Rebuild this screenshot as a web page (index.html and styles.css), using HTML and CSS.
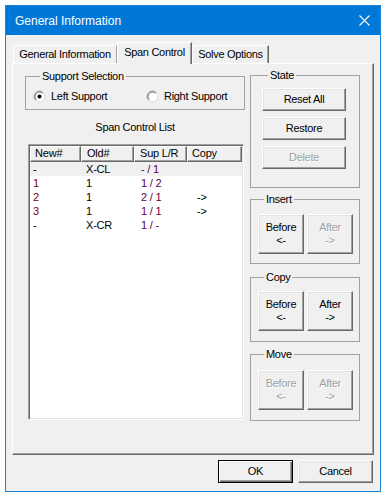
FILE: index.html
```html
<!DOCTYPE html>
<html>
<head>
<meta charset="utf-8">
<link rel="stylesheet" href="styles.css">
</head>
<body>
<div class="window">
  <div class="titlebar">
    <span class="title">General Information</span>
    <svg class="close" width="11" height="11" viewBox="0 0 11 11"><path d="M0.5 0.5 L10.5 10.5 M10.5 0.5 L0.5 10.5" stroke="#fff" stroke-width="1.1" fill="none"/></svg>
  </div>
  <div class="client">
    <div class="tabs">
      <div class="tab t1">General Information</div>
      <div class="tab t2 sel">Span Control</div>
      <div class="tab t3">Solve Options</div>
    </div>
    <div class="panel">
      <div class="left">
        <fieldset class="group support">
          <legend>Support Selection</legend>
          <div class="radios">
            <label class="radio r-left">
              <svg width="13" height="13" viewBox="0 0 13 13"><circle cx="6.5" cy="6.5" r="5.5" fill="#fff" stroke="#a0a0a0"/><path d="M10.4 2.6 A5.5 5.5 0 0 1 2.6 10.4" stroke="#fff" fill="none"/><path d="M3.3 9.7 A4.5 4.5 0 0 1 9.7 3.3" stroke="#696969" fill="none"/><circle cx="6.5" cy="6.5" r="2" fill="#000"/></svg>
              <span>Left Support</span>
            </label>
            <label class="radio">
              <svg width="13" height="13" viewBox="0 0 13 13"><circle cx="6.5" cy="6.5" r="5.5" fill="#fff" stroke="#a0a0a0"/><path d="M10.4 2.6 A5.5 5.5 0 0 1 2.6 10.4" stroke="#fff" fill="none"/><path d="M3.3 9.7 A4.5 4.5 0 0 1 9.7 3.3" stroke="#696969" fill="none"/></svg>
              <span>Right Support</span>
            </label>
          </div>
        </fieldset>
        <div class="list-title">Span Control List</div>
        <div class="list">
          <div class="lv-head">
            <div class="hc c1">New#</div>
            <div class="hc c2">Old#</div>
            <div class="hc c3">Sup L/R</div>
            <div class="hc c4">Copy</div>
          </div>
          <div class="lv-row hl">
            <span class="c1">-</span><span class="c2">X-CL</span><span class="c3 sup">- / 1</span><span class="c4"></span>
          </div>
          <div class="lv-row">
            <span class="c1 num">1</span><span class="c2">1</span><span class="c3 sup">1 / 2</span><span class="c4"></span>
          </div>
          <div class="lv-row">
            <span class="c1 num">2</span><span class="c2">1</span><span class="c3 sup">2 / 1</span><span class="c4">-&gt;</span>
          </div>
          <div class="lv-row">
            <span class="c1 num">3</span><span class="c2">1</span><span class="c3 sup">1 / 1</span><span class="c4">-&gt;</span>
          </div>
          <div class="lv-row">
            <span class="c1">-</span><span class="c2">X-CR</span><span class="c3 sup">1 / -</span><span class="c4"></span>
          </div>
        </div>
      </div>
      <div class="right">
        <fieldset class="group state">
          <legend>State</legend>
          <button class="btn wide">Reset All</button>
          <button class="btn wide">Restore</button>
          <button class="btn wide" disabled>Delete</button>
        </fieldset>
        <fieldset class="group action insert">
          <legend>Insert</legend>
          <div class="pair">
            <button class="btn two">Before<br>&lt;-</button>
            <button class="btn two" disabled>After<br>-&gt;</button>
          </div>
        </fieldset>
        <fieldset class="group action copy">
          <legend>Copy</legend>
          <div class="pair">
            <button class="btn two">Before<br>&lt;-</button>
            <button class="btn two">After<br>-&gt;</button>
          </div>
        </fieldset>
        <fieldset class="group action move">
          <legend>Move</legend>
          <div class="pair">
            <button class="btn two" disabled>Before<br>&lt;-</button>
            <button class="btn two" disabled>After<br>-&gt;</button>
          </div>
        </fieldset>
      </div>
    </div>
    <div class="footer">
      <button class="btn foot default">OK</button>
      <button class="btn foot">Cancel</button>
    </div>
  </div>
</div>
</body>
</html>
```
FILE: styles.css
```css
* { box-sizing: border-box; }
html, body { margin: 0; background: #fff; }
body {
  padding: 5px;
  font-family: "Liberation Sans", Arial, sans-serif;
  font-size: 11px;
  line-height: 13px;
  color: #000;
}
.window {
  width: 376px;
  height: 487px;
  border: 1px solid #1883d7;
  background: #f0f0f0;
  display: flex;
  flex-direction: column;
}
.titlebar {
  height: 29px;
  background: #0078d7;
  color: #fff;
  display: flex;
  align-items: center;
  justify-content: space-between;
  padding: 0 10px 0 9px;
}
.title { font-size: 12px; line-height: 14px; }
.close { display: block; margin-top: -1px; }
.client {
  flex: 1;
  padding: 7px 6px 8px 6px;
  display: flex;
  flex-direction: column;
}
.tabs {
  height: 21px;
  display: flex;
  align-items: flex-end;
  padding-left: 1px;
  letter-spacing: -0.3px;
}
.tab {
  height: 18px;
  border: 1px solid;
  border-color: #fff #696969 transparent #fff;
  border-bottom: none;
  box-shadow: inset -1px 0 #a0a0a0;
  text-align: center;
  line-height: 17px;
  background: #f0f0f0;
}
.t1 { width: 104px; border-right-color: #a0a0a0; box-shadow: none; }
.t2 { width: 75px; }
.t3 { width: 77px; }
.tab.sel {
  height: 22px;
  margin-bottom: -1px;
  line-height: 18px;
  position: relative;
  z-index: 1;
}
.panel {
  height: 392px;
  border: 1px solid;
  border-color: #fff #696969 #696969 #fff;
  box-shadow: inset -1px -1px #a0a0a0;
  padding: 5px 13px 0 12px;
  display: grid;
  grid-template-columns: 220px 110px;
  column-gap: 5px;
  align-items: start;
}
.group {
  margin: 0;
  padding: 0;
  border: 1px solid #a0a0a0;
  min-width: 0;
}
.group legend {
  margin-left: 6px;
  padding: 0 2px;
  height: 13px;
  line-height: 13px;
  letter-spacing: -0.3px;
}
.support { margin-top: 1px; padding: 6px 7px 6px 7px; }
.support legend { margin-left: 7px; }
.radios { display: flex; height: 14px; align-items: center; letter-spacing: -0.3px; }
.radio { display: flex; align-items: center; gap: 5px; }
.radio svg { display: block; flex: none; }
.r-left { width: 113px; }
.list-title {
  margin-top: 11px;
  height: 13px;
  text-align: center;
  letter-spacing: -0.3px;
}
.list {
  margin: 10px 1px 0 3px;
  height: 276px;
  background: #fff;
  border: 1px solid;
  border-color: #a0a0a0 #fff #fff #a0a0a0;
  box-shadow: inset 1px 1px #696969, inset -1px -1px #e3e3e3;
  padding: 1px 1px 1px 1px;
  letter-spacing: -0.2px;
}
.lv-head, .lv-row {
  display: grid;
  grid-template-columns: 51px 53px 53px 55px;
}
.lv-head { height: 16px; }
.hc {
  border: 1px solid;
  border-color: #fff #696969 #696969 #fff;
  box-shadow: inset -1px -1px #a0a0a0;
  background: #f0f0f0;
  line-height: 13px;
  padding-left: 4px;
}
.hc.c2 { padding-left: 5px; }
.hc.c3 { padding-left: 5px; }
.hc.c4 { padding-left: 4px; }
.lv-row { height: 14px; line-height: 14px; }
.lv-row.hl { background: #f0f0f0; }
.lv-row .c1 { padding-left: 3px; }
.lv-row .c2 { padding-left: 5px; }
.lv-row .c3 { padding-left: 7px; }
.lv-row .c4 { padding-left: 10px; }
.num { color: #800000; }
.sup { color: #600050; }
.right { display: flex; flex-direction: column; }
.state { padding: 6px 0 18px 11px; }
.btn {
  appearance: none;
  margin: 0;
  font: inherit;
  letter-spacing: -0.3px;
  color: #000;
  background: #f0f0f0;
  border: 1px solid;
  border-color: #fff #696969 #696969 #fff;
  box-shadow: inset -1px -1px #a0a0a0, inset 1px 1px #e3e3e3;
  padding: 0;
  display: block;
  text-align: center;
}
.btn:disabled {
  color: #a0a0a0;
  text-shadow: 1px 1px 0 #fff;
}
.wide { width: 84px; height: 23px; }
.wide + .wide { margin-top: 6px; }
.action { padding: 8px 0 9px 7px; }
.insert { margin-top: 5px; }
.copy { margin-top: 7px; padding-top: 7px; padding-bottom: 10px; }
.move { margin-top: 6px; padding-top: 9px; padding-bottom: 10px; }
.pair { display: flex; gap: 3px; }
.two { width: 46px; height: 40px; line-height: 13px; }
.footer {
  margin-top: 5px;
  display: flex;
  justify-content: flex-end;
  gap: 5px;
  padding-right: 1px;
}
.foot { width: 75px; height: 23px; }
.default {
  border-color: #000;
  box-shadow: inset 1px 1px #fff, inset -1px -1px #696969, inset -2px -2px #a0a0a0;
}
```
